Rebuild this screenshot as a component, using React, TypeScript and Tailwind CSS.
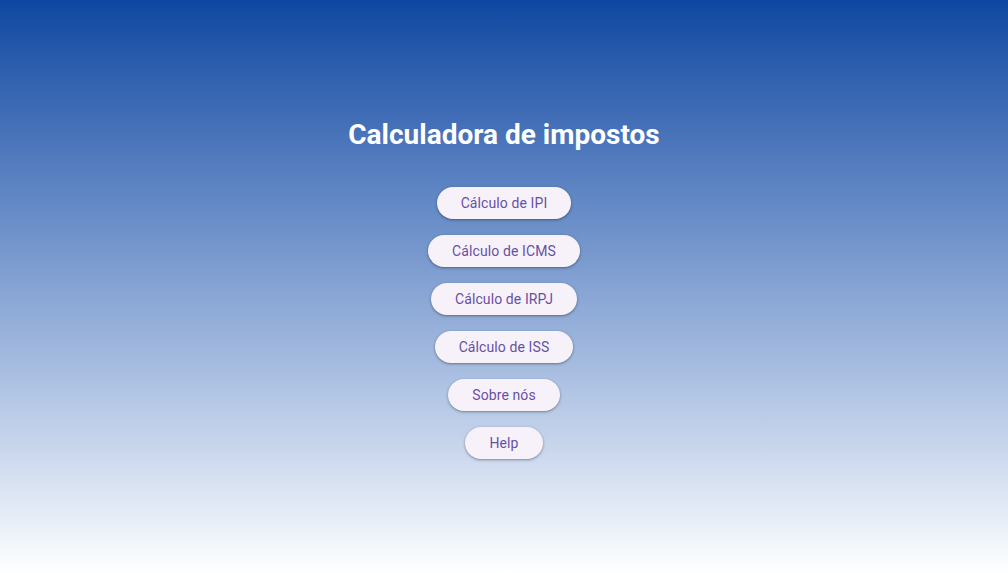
const ITEMS = ["Cálculo de IPI", "Cálculo de ICMS", "Cálculo de IRPJ", "Cálculo de ISS", "Sobre nós", "Help"];

export default function App() {
  return (
    <div
      className="h-[573px] w-full flex flex-col items-center justify-center bg-gradient-to-b from-[#0d47a1] to-white"
      style={{ fontFamily: "Roboto, 'Liberation Sans', sans-serif" }}
    >
      <h1 className="text-[28px] leading-[42px] font-bold text-white mb-[31px]">Calculadora de impostos</h1>
      <div className="flex flex-col items-center gap-4">
        {ITEMS.map((label) => (
          <button
            key={label}
            className="h-8 px-6 rounded-full bg-[#f7f2fa] text-[#6750a4] text-sm font-normal tracking-[0.1px] shadow-[0_1px_2px_rgba(0,0,0,0.25),0_1px_3px_1px_rgba(0,0,0,0.1)]"
          >
            {label}
          </button>
        ))}
      </div>
    </div>
  );
}
